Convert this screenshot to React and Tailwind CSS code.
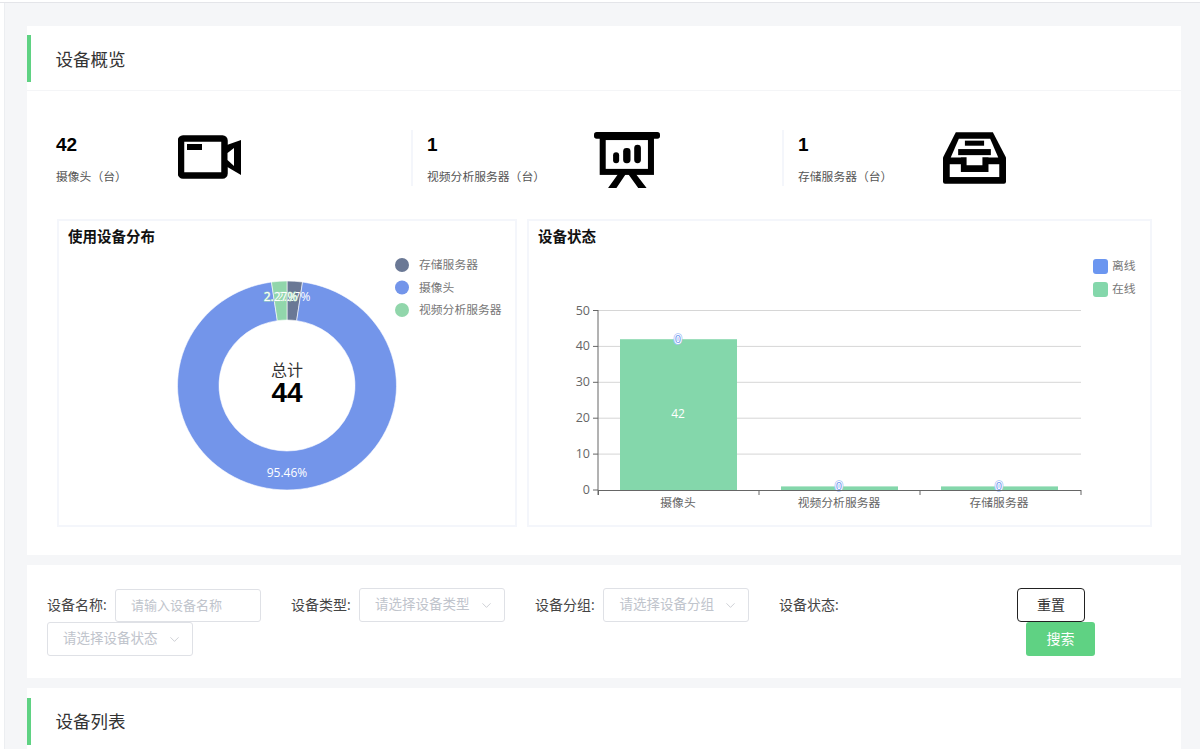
import React from 'react';
import { ChevronDown } from 'lucide-react';

function SectionHeader({ title, border, className, titleClass }) {
  return (
    <div className={`flex h-[65px] items-center ${border ? 'border-b border-[#f4f5f7]' : ''} ${className || ''}`}>
      <div className="h-[47px] w-[4px] bg-[#5fd283]" />
      <h2 className={`ml-[24.5px] text-[17.5px] font-normal text-[#333] ${titleClass || ''}`}>{title}</h2>
    </div>
  );
}

function CameraIcon() {
  return (
    <svg className="mt-[5px]" width="64" height="46" viewBox="178 135 64 46">
      <rect x="181" y="138.5" width="43.5" height="37" rx="2" fill="none" stroke="#000" strokeWidth="6.5" />
      <rect x="187" y="144" width="15" height="6" fill="#000" />
      <path d="M224 146l17-6v35l-17-10z" fill="#000" />
      <path d="M227.5 153l6.5-5v18l-6.5-6z" fill="#fff" />
    </svg>
  );
}

function BoardIcon() {
  return (
    <svg className="mt-[2px]" width="66" height="56" viewBox="583 65 197 167">
      <rect x="583" y="65" width="197" height="20" rx="8" fill="#000" />
      <rect x="609" y="80" width="144" height="104" fill="none" stroke="#000" strokeWidth="18" />
      <rect x="640" y="125" width="18" height="33" rx="9" fill="#000" />
      <rect x="670" y="113" width="22" height="45" rx="10" fill="#000" />
      <rect x="703" y="103" width="20" height="55" rx="10" fill="#000" />
      <path d="M655 190L625 232H650L678 190zM685 190L715 232H740L708 190z" fill="#000" />
    </svg>
  );
}

function InboxIcon() {
  return (
    <svg className="mt-[2px]" width="63" height="52" viewBox="490 65 187 153">
      <path d="M528 65H638L677 140V212Q677 218 671 218H496Q490 218 490 212V140z" fill="#000" />
      <path d="M537 84H630L654 140H513z" fill="#fff" />
      <rect x="510" y="160" width="147" height="38" fill="#fff" />
      <rect x="543" y="140" width="82" height="43" fill="#000" />
      <rect x="560" y="133" width="47" height="30" fill="#fff" />
      <rect x="555" y="90" width="57" height="15" fill="#000" />
      <rect x="535" y="115" width="97" height="18" fill="#000" />
    </svg>
  );
}

function Stat({ value, label, icon, className, textClass }) {
  return (
    <div className={`flex h-[56px] items-start ${className}`}>
      <div className={textClass}>
        <div className="mt-[3px] font-['Liberation_Sans'] text-[19px] leading-[24px] font-bold text-black">{value}</div>
        <div className="mt-[11px] text-[11.8px] leading-[16px] text-[#555]">{label}</div>
      </div>
      {icon}
    </div>
  );
}

// donut arc between two fractions of the circle, clockwise from 12 o'clock
// the reference is squashed a little vertically, so the radii differ per axis
function arc(from, to) {
  const cx = 287;
  const cy = 385.5;
  const pt = (rx, ry, f) => {
    const a = f * Math.PI * 2;
    return `${(cx + rx * Math.sin(a)).toFixed(2)} ${(cy - ry * Math.cos(a)).toFixed(2)}`;
  };
  const large = to - from > 0.5 ? 1 : 0;
  return `M${pt(109.5, 104.5, from)}A109.5 104.5 0 ${large} 1 ${pt(109.5, 104.5, to)}L${pt(68, 65.5, to)}A68 65.5 0 ${large} 0 ${pt(68, 65.5, from)}Z`;
}

function DonutChart() {
  const legend = [
    { name: '存储服务器', color: '#6a7895', y: 265 },
    { name: '摄像头', color: '#7395ea', y: 287.5 },
    { name: '视频分析服务器', color: '#91d6ab', y: 310 },
  ];
  return (
    <svg width="456" height="273" viewBox="59 251 456 273">
      <path d={arc(0, 0.0227)} fill="#6a7895" stroke="#fff" strokeWidth="0.6" />
      <path d={arc(0.0227, 0.9773)} fill="#7395ea" stroke="#fff" strokeWidth="0.6" />
      <path d={arc(0.9773, 1)} fill="#91d6ab" stroke="#fff" strokeWidth="0.6" />
      <g fontSize="12" textAnchor="middle" fill="#fff">
        <text x="293.5" y="301">2.27%</text>
        <text x="280.5" y="301" stroke="#a5dcba" strokeWidth="1" paintOrder="stroke">2.27%</text>
        <text x="287" y="477">95.46%</text>
      </g>
      <text x="287" y="376" fontSize="16" textAnchor="middle" fill="#333">总计</text>
      <text x="287" y="402" fontSize="28" fontWeight="700" textAnchor="middle" fill="#000" fontFamily="Liberation Sans">44</text>
      {legend.map((l) => (
        <g key={l.name}>
          <circle cx="402" cy={l.y} r="7" fill={l.color} />
          <text x="419" y={l.y + 4} fontSize="11.8" fill="#777">{l.name}</text>
        </g>
      ))}
    </svg>
  );
}

function BarChart() {
  const ticks = [50, 40, 30, 20, 10, 0];
  const bars = [
    { name: '摄像头', x: 620, value: 42 },
    { name: '视频分析服务器', x: 781, value: 1 },
    { name: '存储服务器', x: 941, value: 1 },
  ];
  const yOf = (v) => 490 - v * 3.59;
  return (
    <svg width="621" height="273" viewBox="529 251 621 273">
      {ticks.map((t) => (
        <g key={t}>
          {t > 0 && <line x1="598" x2="1081" y1={yOf(t)} y2={yOf(t)} stroke="#d6d6d6" />}
          <line x1="593" x2="598" y1={yOf(t)} y2={yOf(t)} stroke="#666" />
          <text x="590" y={yOf(t) + 4} fontSize="12.5" textAnchor="end" fill="#666">{t}</text>
        </g>
      ))}
      {bars.map((b) => (
        <g key={b.name}>
          <rect x={b.x} y={yOf(b.value)} width="117" height={b.value * 3.59} fill="#84d7ab" />
          <g fontSize="11" textAnchor="middle">
            <text x={b.x + 58} y={yOf(b.value) + 4} fill="#a9c3f7" stroke="#a9c3f7" strokeWidth="3.5">0</text>
            <text x={b.x + 58} y={yOf(b.value) + 4} fill="#6b96f0" stroke="#fff" strokeWidth="2" paintOrder="stroke">0</text>
          </g>
          <text x={b.x + 58} y="506.5" fontSize="11.8" textAnchor="middle" fill="#666">{b.name}</text>
        </g>
      ))}
      <text x="678" y="418" fontSize="12" textAnchor="middle" fill="#fff">42</text>
      <line x1="598" x2="598" y1="310" y2="495" stroke="#666" />
      <line x1="598" x2="1081" y1="490.5" y2="490.5" stroke="#666" />
      {[598.5, 759, 920, 1081].map((x) => (
        <line key={x} x1={x} x2={x} y1="490" y2="495" stroke="#666" />
      ))}
      <rect x="1093" y="259" width="15" height="15" rx="3" fill="#6b96f0" />
      <text x="1112" y="270" fontSize="11.8" fill="#777">离线</text>
      <rect x="1093" y="282" width="15" height="15" rx="3" fill="#84d7ab" />
      <text x="1112" y="293" fontSize="11.8" fill="#777">在线</text>
    </svg>
  );
}

function ChartPanel({ title, className, children }) {
  return (
    <div className={`h-[308px] border-2 border-[#f4f6fb] ${className}`}>
      <h3 className="h-[30px] pt-[6px] pl-[9px] text-[14.5px] leading-[20px] font-bold text-[#111]">{title}</h3>
      {children}
    </div>
  );
}

function SelectBox({ placeholder, className }) {
  return (
    <div className={`flex h-[34px] w-[146px] items-center justify-between rounded-[3px] border border-[#dfe1e6] pr-[10px] pl-[15px] ${className || ''}`}>
      <span className="pb-[1px] text-[13.5px] whitespace-nowrap text-[#c0c4cc]">{placeholder}</span>
      <ChevronDown size={15} strokeWidth={1} color="#b0b4bc" />
    </div>
  );
}

function Label({ children }) {
  return <label className="block w-[60px] pb-[2px] text-[14px] whitespace-nowrap text-[#444]">{children}</label>;
}

export default function App() {
  return (
    <div className="flex h-[749px] flex-col overflow-hidden bg-white font-['Open_Sans','Noto_Sans_CJK_SC',sans-serif]">
      <div className="h-[3px] shrink-0 border-b border-[#e4e5e9] bg-white" />
      <div className="flex min-h-0 flex-1">
        <div className="w-[5px] shrink-0 border-r border-[#eceef1] bg-white" />
        <main className="flex flex-1 flex-col gap-[10px] overflow-hidden bg-[#f5f6f8] pt-[23px] pr-[19px] pl-[22px]">
          <section className="h-[529px] shrink-0 bg-white">
            <SectionHeader title="设备概览" titleClass="pt-[3px]" border />
            <div className="mt-[39px] flex pl-[29px]">
              <Stat className="w-[355px]" textClass="w-[122px]" value="42" label="摄像头（台）" icon={<CameraIcon />} />
              <Stat className="w-[371px] border-l-2 border-[#f4f6fb] pl-[14px]" textClass="w-[167px]" value="1" label="视频分析服务器（台）" icon={<BoardIcon />} />
              <Stat className="border-l-2 border-[#f4f6fb] pl-[14px]" textClass="w-[145px]" value="1" label="存储服务器（台）" icon={<InboxIcon />} />
            </div>
            <div className="mt-[33px] flex gap-[10px] pl-[30px]">
              <ChartPanel title="使用设备分布" className="w-[460px]">
                <DonutChart />
              </ChartPanel>
              <ChartPanel title="设备状态" className="w-[625px]">
                <BarChart />
              </ChartPanel>
            </div>
          </section>

          <section className="h-[113px] shrink-0 bg-white pt-[23px] pl-[20px]">
            <div className="flex h-[34px] items-center">
              <Label>设备名称:</Label>
              <input
                className="ml-[8px] h-[33px] w-[146px] rounded-[3px] border border-[#dfe1e6] pl-[15px] text-[13px] placeholder:text-[#c0c4cc]"
                placeholder="请输入设备名称"
              />
              <div className="ml-[30px]"><Label>设备类型:</Label></div>
              <SelectBox className="ml-[8px]" placeholder="请选择设备类型" />
              <div className="ml-[30px]"><Label>设备分组:</Label></div>
              <SelectBox className="ml-[8.4px]" placeholder="请选择设备分组" />
              <div className="ml-[29.6px]"><Label>设备状态:</Label></div>
              <button className="ml-[178px] h-[34px] w-[68px] rounded-[4px] border border-[#222] bg-white pb-[2px] text-[14px] text-[#333]">重置</button>
            </div>
            <div className="flex h-[34px] items-center justify-between">
              <SelectBox placeholder="请选择设备状态" />
              <button className="mr-[86px] h-[34px] w-[69px] rounded-[3px] bg-[#5fd283] pb-[2px] text-[14px] text-white">搜索</button>
            </div>
          </section>

          <section className="flex-1 bg-white">
            <SectionHeader title="设备列表" className="mt-px" />
          </section>
        </main>
      </div>
    </div>
  );
}
